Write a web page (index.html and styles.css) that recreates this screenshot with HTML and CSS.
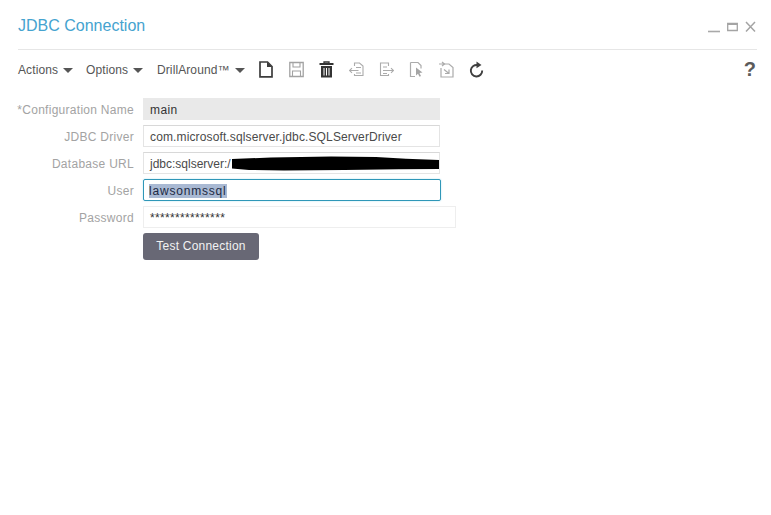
FILE: index.html
```html
<!DOCTYPE html>
<html lang="en">
<head>
<meta charset="utf-8">
<title>JDBC Connection</title>
<link rel="stylesheet" href="styles.css">
</head>
<body>
<div class="panel">
  <header class="titlebar">
    <h1 class="title">JDBC Connection</h1>
    <div class="winctl">
      <svg class="ctl" width="12" height="12" viewBox="0 0 12 12"><path d="M0 10.500h12" stroke="#a9a9a9" stroke-width="1.600"/></svg>
      <svg class="ctl" width="11" height="12" viewBox="0 0 11 12"><path d="M.7 2.500h9.600v7H.7z" fill="none" stroke="#a4a4a4" stroke-width="1.300"/><path d="M.7 3h9.600" stroke="#a4a4a4" stroke-width="2"/></svg>
      <svg class="ctl" width="11" height="12" viewBox="0 0 11 12"><path d="M1 1l9 9.500M10 1l-9 9.500" stroke="#a4a4a4" stroke-width="1.500"/></svg>
    </div>
  </header>
  <nav class="toolbar">
    <span class="menu menu-actions">Actions<i class="caret"></i></span>
    <span class="menu menu-options">Options<i class="caret"></i></span>
    <span class="menu menu-drill">DrillAround™<i class="caret"></i></span>
    <div class="tools">
      <svg width="14" height="17" viewBox="0 0 14 17"><path d="M1 1h7.500l4.500 4.500V15.800H1z" fill="none" stroke="#3c3c3c" stroke-width="1.700"/><path d="M8 1v5h5z" fill="#3c3c3c"/></svg>
      <svg width="15" height="17" viewBox="0 0 15 17"><path d="M.8 1.500h13.400v14H.8z" fill="none" stroke="#a2a2a2" stroke-width="1.300"/><path d="M4 2v4h7V2M3.500 15v-5h8v5" fill="none" stroke="#a2a2a2" stroke-width="1.100"/></svg>
      <svg width="15" height="17" viewBox="0 0 15 17"><path d="M.5 3h14" stroke="#333" stroke-width="2"/><path d="M5 3V1h5v2" fill="none" stroke="#333" stroke-width="1.300"/><path d="M2 5h11v11.500H2z" fill="#333"/><path d="M5 7v7.500M7.500 7v7.500M10 7v7.500" stroke="#fff" stroke-width="1"/></svg>
      <svg width="15" height="17" viewBox="0 0 15 17"><path d="M5.500 5V2h5l3.500 3v9.500H5.500v-1.500" fill="none" stroke="#ababab" stroke-width="1.100"/><path d="M.5 9.500h9M3 7.200L.5 9.500 3 11.800M7 6.500h5M7 12h5" fill="none" stroke="#ababab" stroke-width="1.100"/></svg>
      <svg width="15" height="17" viewBox="0 0 15 17"><path d="M9.500 5V2h-8v12.500h8V13" fill="none" stroke="#ababab" stroke-width="1.100"/><path d="M4 9.500h10.500M12 7.200l2.500 2.300-2.500 2.300M4 6h4M4 12.500h4" fill="none" stroke="#ababab" stroke-width="1.100"/></svg>
      <svg width="15" height="17" viewBox="0 0 15 17"><path d="M1.500 1.500h7.500l3 3V7.500M6 15.500H1.500v-14" fill="none" stroke="#ababab" stroke-width="1.200"/><path d="M7 6.500l6.500 5-3 .5 1.500 3-1.500.7-1.500-3L7 14.500z" fill="#a5a5a5"/></svg>
      <svg width="15" height="17" viewBox="0 0 15 17"><path d="M4 3h6l4 3.500v9.500H2V7" fill="none" stroke="#ababab" stroke-width="1.200"/><path d="M0 3h5M3 1l2.500 2L3 5M5 8.500l5 4M10 8.500v4H6" fill="none" stroke="#ababab" stroke-width="1.200"/></svg>
      <svg width="15" height="17" viewBox="0 0 15 17"><path d="M8.800 4.200a5.700 5.700 0 1 0 4.400 5.300" fill="none" stroke="#3f3f3f" stroke-width="1.900"/><path d="M7.500.5l5 3.600-5 3.200z" fill="#3f3f3f"/></svg>
    </div>
    <span class="help">?</span>
  </nav>
  <form class="form">
    <div class="row">
      <label class="label">*Configuration Name</label>
      <div class="input input-readonly">main</div>
    </div>
    <div class="row">
      <label class="label">JDBC Driver</label>
      <div class="input">com.microsoft.sqlserver.jdbc.SQLServerDriver</div>
    </div>
    <div class="row">
      <label class="label">Database URL</label>
      <div class="input input-url">jdbc:sqlserver:/
        <svg class="redact" width="208" height="18" viewBox="0 0 208 18" preserveAspectRatio="none"><path d="M1 5L40 3.500l60-1 45 .5 30 1.800 33 1.200V15l-40 .3-55 .7-60 .5-35-.5-17-1.500z" fill="#000"/></svg>
      </div>
    </div>
    <div class="row">
      <label class="label">User</label>
      <div class="input input-focus"><span class="selected">lawsonmssql</span></div>
    </div>
    <div class="row">
      <label class="label">Password</label>
      <div class="input input-wide input-pass">***************</div>
    </div>
    <div class="row">
      <span class="label"></span>
      <button class="btn" type="button">Test Connection</button>
    </div>
  </form>
</div>
</body>
</html>
```
FILE: styles.css
```css
html, body {
  margin: 0;
  padding: 0;
  background: #fff;
}
body {
  width: 771px;
  height: 515px;
  overflow: hidden;
  font-family: "Liberation Sans", Arial, sans-serif;
}
.panel {
  padding: 0 14px 0 18px;
}
.titlebar {
  display: flex;
  align-items: center;
  justify-content: space-between;
  height: 50px;
  padding-top: 3px;
  box-sizing: border-box;
  border-bottom: 1px solid #e6e6e6;
}
.title {
  margin: 0;
  font-size: 16px;
  font-weight: 400;
  color: #45a3cf;
}
.winctl {
  display: flex;
  gap: 7px;
  align-items: center;
  margin-top: 1px;
  margin-right: 1px;
}
.toolbar {
  display: flex;
  align-items: center;
  height: 39px;
  font-size: 12px;
  color: #555;
}
.menu {
  display: inline-flex;
  align-items: center;
  letter-spacing: 0.1px;
}
.menu-actions { width: 68px; }
.menu-options { width: 71px; }
.menu-drill { width: 102px; }
.caret {
  width: 0;
  height: 0;
  margin-left: 5px;
  margin-top: 1px;
  border-left: 5px solid transparent;
  border-right: 5px solid transparent;
  border-top: 5px solid #555;
}
.tools {
  display: grid;
  grid-auto-flow: column;
  grid-auto-columns: 30px;
  align-items: center;
}
.help {
  margin-left: auto;
  font-size: 20px;
  font-weight: 700;
  color: #5b5b5b;
  margin-right: 1px;
}
.form {
  padding-top: 9px;
}
.row {
  display: flex;
  align-items: center;
  margin-bottom: 5px;
}
.label {
  display: flex;
  justify-content: flex-end;
  width: 116px;
  margin-right: 9px;
  padding-top: 2px;
  white-space: nowrap;
  font-size: 12px;
  letter-spacing: 0.28px;
  color: #a3a3a3;
  flex: none;
}
.input {
  position: relative;
  box-sizing: border-box;
  width: 297px;
  height: 22px;
  padding: 0 6px;
  line-height: 22px;
  font-size: 12px;
  letter-spacing: 0.13px;
  color: #4a4a4a;
  background: #fff;
  border: 1px solid #e4e4e4;
  border-top-color: #d8d8d8;
  white-space: nowrap;
}
.input-readonly {
  background: #e9e9e9;
  border-color: #e9e9e9;
  color: #333;
  letter-spacing: 0.4px;
}
.input-url {
  overflow: hidden;
  letter-spacing: 0;
}
.redact {
  position: absolute;
  left: 87px;
  top: 1px;
}
.input-focus {
  width: 298px;
  border: 1px solid #2f97b8;
  border-radius: 2px;
  color: #222;
  box-shadow: 0 0 2px #b5e2f0;
  padding-left: 5px;
  letter-spacing: 0.8px;
}
.selected {
  background: #a9b9d3;
  color: #1d2a44;
}
.input-wide {
  width: 313px;
}
.input-pass {
  border-color: #eeeeee;
  color: #333;
  letter-spacing: 0.34px;
}
.btn {
  display: block;
  box-sizing: border-box;
  width: 116px;
  height: 27px;
  padding: 0 0 2px;
  border: 0;
  border-radius: 3px;
  background: #686875;
  color: #f2f2f2;
  font-family: "Liberation Sans", Arial, sans-serif;
  font-size: 12px;
  letter-spacing: 0.22px;
}
```
